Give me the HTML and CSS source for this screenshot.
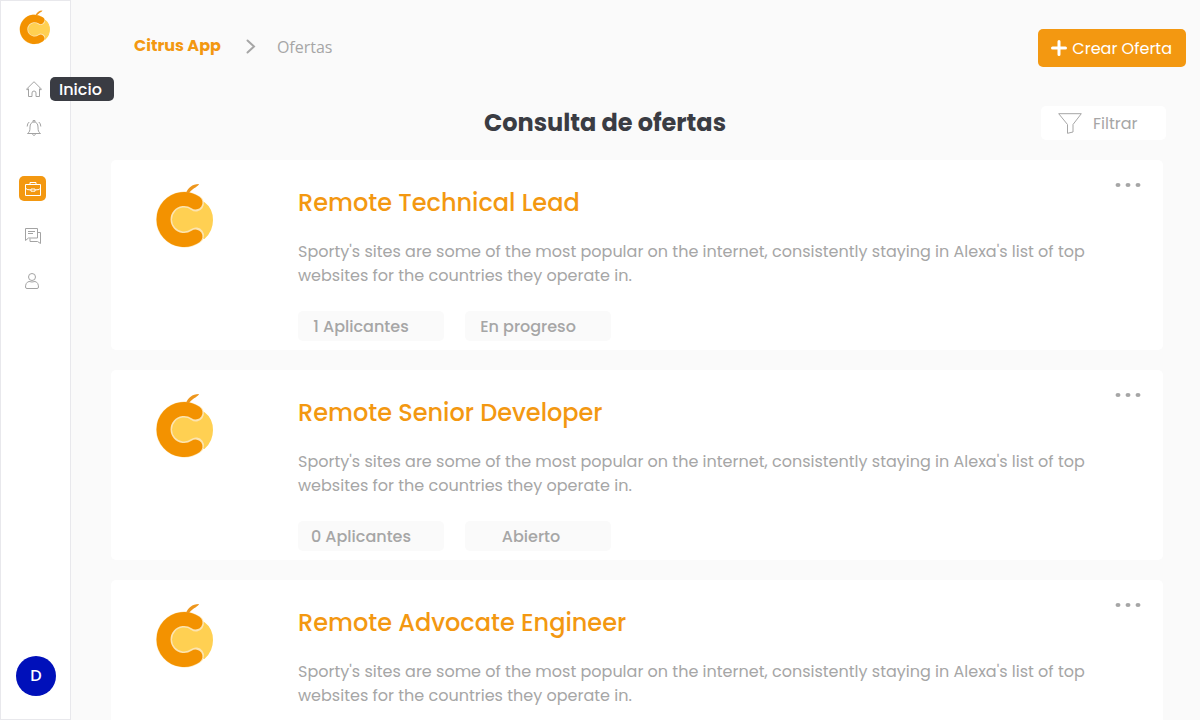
FILE: index.html
```html
<!DOCTYPE html>
<html lang="es">
<head>
<meta charset="utf-8">
<meta name="viewport" content="width=device-width, initial-scale=1">
<title>Citrus App - Ofertas</title>
<link rel="stylesheet" href="styles.css">
</head>
<body>
<svg class="sprite" aria-hidden="true">
  <symbol id="citrus" viewBox="0 0 60 66">
    <path d="M17 35.500a13 13 0 0 1 20-11L49 19Q57 25 57 36T49 54L37 47a13 13 0 0 1-20-11.500Z" fill="#ffd052" stroke="#ffd052" stroke-width="2" stroke-linejoin="round"/>
    <path d="M41 19.500A20 20 0 1 0 41 51.500" fill="none" stroke="#fce4b0" stroke-width="16" stroke-linecap="round"/>
    <path d="M40.500 18.500A20.500 20.500 0 1 0 40.500 52.500" fill="none" stroke="#f39200" stroke-width="14" stroke-linecap="round"/>
    <path d="M31 9C33 4 37 0 44 0C43 3 39 3 34 9Z" fill="#ee961c"/>
  </symbol>
</svg>
<div class="app">
  <aside class="sidebar">
    <a class="brand" href="#" aria-label="Citrus App"><svg class="brand-logo"><use href="#citrus"/></svg></a>
    <nav class="nav" aria-label="Principal">
      <a class="nav-link nav-home" href="#" aria-label="Inicio">
        <svg class="icon" viewBox="0 0 16 16"><path d="M.5 8.200 8 .7l7.500 7.500q0 1-1.500.3M2 8.500q-1.500.7-1.500-.3M2.500 7.500v8h3.500v-3.500a2 2 0 0 1 4 0v3.500h3.500v-8"/></svg>
        <span class="tooltip" role="tooltip">Inicio</span>
      </a>
      <a class="nav-link nav-alerts" href="#" aria-label="Notificaciones">
        <svg class="icon" viewBox="0 0 16 16"><path d="M1.500 13.500c2-1.500 2.500-2.500 2.500-6.500 0-3 1.500-5 4-5s4 2 4 5c0 4 .5 5 2.500 6.500ZM7 2V.6h2V2M6.500 13.500c0 2.500 3 2.500 3 0M3.200 2Q1.200 3.500 1.200 6.500M12.800 2q2 1.500 2 4.500"/></svg>
      </a>
      <a class="nav-link nav-jobs" href="#" aria-label="Ofertas" aria-current="page">
        <svg class="icon" viewBox="0 0 16 16"><path d="M.5 3.500h15v11H.5ZM.5 4v3q.5 2 5.500 2m4 0q5.500 0 5.500-2M5 3.500v-2h6v2M6 8h4v2.200H6Z"/></svg>
      </a>
      <a class="nav-link nav-chat" href="#" aria-label="Mensajes">
        <svg class="icon" viewBox="0 0 16 16"><path d="M.5.5h12v9.500H3.500l-3 2.500ZM3 3.500h7M3 5.500h5M12.500 4.500h3v11L12.500 13.500H5v-3"/></svg>
      </a>
      <a class="nav-link nav-profile" href="#" aria-label="Perfil">
        <svg class="icon" viewBox="0 0 16 16"><circle cx="8" cy="4" r="3.500"/><path d="M5 8.500q3 1 6 0c2.500.5 3.500 3 3.500 5.500q0 1.500-1.500 1.500H3q-1.500 0-1.500-1.500C1.500 11.500 2.500 9 5 8.500Z"/></svg>
      </a>
    </nav>
    <button class="avatar" type="button" aria-label="Cuenta D">D</button>
  </aside>
  <main class="main">
    <header class="topbar">
      <nav class="crumbs" aria-label="Ruta">
        <a class="crumb-home" href="#">Citrus App</a>
        <svg class="crumb-arrow" viewBox="0 0 10 16"><path d="m1.500 2.500 6.500 6-6.500 6"/></svg>
        <span class="crumb-current">Ofertas</span>
      </nav>
      <button class="create" type="button"><svg class="plus" viewBox="0 0 16 16"><path d="M8 1.500v13M1.500 8h13"/></svg><span class="label">Crear Oferta</span></button>
    </header>
    <div class="heading">
      <h1 class="title">Consulta de ofertas</h1>
      <button class="filter" type="button"><svg class="funnel" viewBox="0 0 24 21"><path d="M.7.700h22.600L15 11.500v7.500L9.500 20.300v-8.800Z"/></svg><span class="label">Filtrar</span></button>
    </div>
    <section class="offers" aria-label="Ofertas">
      <article class="card">
        <svg class="card-logo"><use href="#citrus"/></svg>
        <div class="card-body">
          <h2 class="card-title">Remote Technical Lead</h2>
          <p class="card-text">Sporty's sites are some of the most popular on the internet, consistently staying in Alexa's list of top websites for the countries they operate in.</p>
          <div class="tags"><span class="tag">1 Aplicantes</span><span class="tag">En progreso</span></div>
        </div>
        <button class="more" type="button" aria-label="Opciones"><svg class="dots" viewBox="0 0 26 6"><ellipse cx="3" cy="3" rx="2.500" ry="2"/><ellipse cx="13" cy="3" rx="2.500" ry="2"/><ellipse cx="23" cy="3" rx="2.500" ry="2"/></svg></button>
      </article>
      <article class="card">
        <svg class="card-logo"><use href="#citrus"/></svg>
        <div class="card-body">
          <h2 class="card-title">Remote Senior Developer</h2>
          <p class="card-text">Sporty's sites are some of the most popular on the internet, consistently staying in Alexa's list of top websites for the countries they operate in.</p>
          <div class="tags"><span class="tag">0 Aplicantes</span><span class="tag tag-open">Abierto</span></div>
        </div>
        <button class="more" type="button" aria-label="Opciones"><svg class="dots" viewBox="0 0 26 6"><ellipse cx="3" cy="3" rx="2.500" ry="2"/><ellipse cx="13" cy="3" rx="2.500" ry="2"/><ellipse cx="23" cy="3" rx="2.500" ry="2"/></svg></button>
      </article>
      <article class="card">
        <svg class="card-logo"><use href="#citrus"/></svg>
        <div class="card-body">
          <h2 class="card-title">Remote Advocate Engineer</h2>
          <p class="card-text">Sporty's sites are some of the most popular on the internet, consistently staying in Alexa's list of top websites for the countries they operate in.</p>
        </div>
        <button class="more" type="button" aria-label="Opciones"><svg class="dots" viewBox="0 0 26 6"><ellipse cx="3" cy="3" rx="2.500" ry="2"/><ellipse cx="13" cy="3" rx="2.500" ry="2"/><ellipse cx="23" cy="3" rx="2.500" ry="2"/></svg></button>
      </article>
    </section>
  </main>
</div>
</body>
</html>
```
FILE: styles.css
```css
* { box-sizing: border-box; }
body {
  margin: 0;
  background: #fafafa;
  color: #a6a6a6;
  font: 16px/24px Poppins, Inter, sans-serif;
}
a { color: inherit; text-decoration: none; }
button { border: 0; margin: 0; padding: 0; font: inherit; color: inherit; background: none; cursor: pointer; }
h1, h2, p { margin: 0; }
svg { display: block; flex: none; }
.sprite { position: absolute; width: 0; height: 0; }
.app { display: flex; height: 100vh; }

.sidebar {
  display: flex;
  flex-direction: column;
  flex: none;
  width: 71px;
  padding: 9px 0 23px;
  background: #fff;
  border: 1px solid #e8e8ec;
}
.brand { padding-left: 18px; }
.brand-logo { width: 32px; height: 36px; }
.nav { display: flex; flex-direction: column; padding: 31px 0 0 18px; }
.nav-link { display: flex; align-items: center; justify-content: center; position: relative; width: 28px; height: 25px; }
.icon { width: 16px; height: 16px; fill: none; stroke: #a3a3a3; stroke-width: 1; }
.nav-home, .nav-alerts { width: 30px; height: 24px; }
.nav-alerts { margin-top: 15px; }
.nav-jobs { margin-top: 36px; width: 27px; border-radius: 5px; background: #f39811; }
.nav-jobs .icon { stroke: #fff; }
.nav-chat { margin-top: 22px; }
.nav-profile { margin-top: 20px; width: 26px; }
.tooltip {
  position: absolute;
  z-index: 2;
  left: 31px;
  top: 0;
  width: 64px;
  height: 24px;
  padding-left: 9px;
  border-radius: 5px;
  background: #3a3c43;
  color: #fff;
  font-weight: 500;
  line-height: 26px;
}
.avatar {
  width: 40px;
  height: 40px;
  margin: auto 0 0 15px;
  border-radius: 50%;
  background: #0010ba;
  color: #fff;
  font-weight: 500;
}

.main { flex: 1; min-width: 0; padding-left: 40px; overflow-y: auto; scrollbar-width: none; }
.topbar { display: flex; justify-content: space-between; align-items: flex-start; padding: 29px 14px 0 23px; }
.crumbs { display: flex; align-items: center; padding-top: 4px; }
.crumb-home { color: #f39811; font-weight: 700; }
.crumb-arrow { width: 10px; height: 16px; margin: 0 21px 0 25px; fill: none; stroke: #a6a6a6; stroke-width: 2; stroke-linecap: round; }
.crumb-current { padding-top: 2px; font-family: "Open Sans", sans-serif; }
.create {
  display: flex;
  align-items: center;
  gap: 5px;
  height: 38px;
  padding: 0 14px 0 13px;
  border-radius: 5px;
  background: #f39811;
  color: #fff;
}
.label { padding-top: 2px; }
.plus { width: 16px; height: 16px; fill: none; stroke: #fff; stroke-width: 3; stroke-linecap: round; }
.heading { display: flex; align-items: center; padding: 39px 34px 0 58px; }
.title { flex: 1; color: #3a3c43; font-size: 24px; line-height: 32px; font-weight: 700; text-align: center; }
.filter { display: flex; align-items: center; gap: 11px; width: 125px; height: 34px; padding-left: 17px; border-radius: 5px; background: #fff; }
.funnel { width: 24px; height: 21px; fill: none; stroke: #a6a6a6; stroke-width: 1; }

.offers { display: flex; flex-direction: column; gap: 20px; padding: 20px 37px 20px 0; }
.card { display: flex; align-items: flex-start; min-height: 190px; padding: 19px 22px 9px 44px; border-radius: 5px; background: #fff; }
.card-logo { width: 60px; height: 66px; margin: 5px 83px 0 0; }
.card-body { flex: 1; min-width: 0; padding-top: 6px; }
.card-title { color: #f39811; font-size: 24px; line-height: 36px; font-weight: 500; }
.card-text { max-width: 792px; padding-top: 19px; }
.tags { display: flex; gap: 21px; padding-top: 23px; }
.tag { width: 146px; height: 30px; padding-right: 20px; border-radius: 5px; background: #fafafa; font-weight: 500; line-height: 32px; text-align: center; }
.tag-open { padding-right: 14px; }
.more { flex: none; padding: 3px 0; }
.dots { width: 26px; height: 6px; fill: #a6a6a6; }
```
